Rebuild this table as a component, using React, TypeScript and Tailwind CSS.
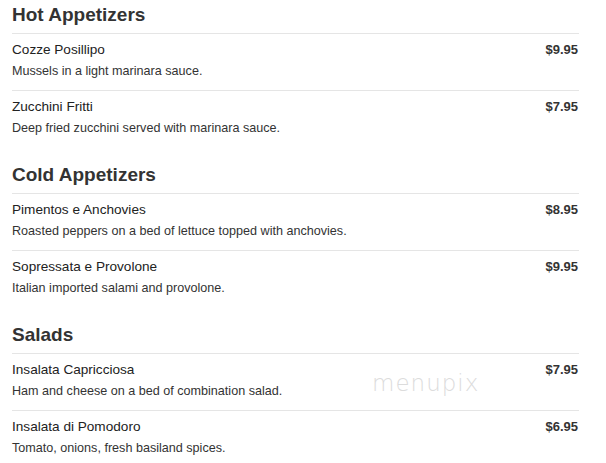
const menu = [
  {
    title: "Hot Appetizers",
    items: [
      { name: "Cozze Posillipo", desc: "Mussels in a light marinara sauce.", price: "$9.95" },
      { name: "Zucchini Fritti", desc: "Deep fried zucchini served with marinara sauce.", price: "$7.95" },
    ],
  },
  {
    title: "Cold Appetizers",
    items: [
      { name: "Pimentos e Anchovies", desc: "Roasted peppers on a bed of lettuce topped with anchovies.", price: "$8.95" },
      { name: "Sopressata e Provolone", desc: "Italian imported salami and provolone.", price: "$9.95" },
    ],
  },
  {
    title: "Salads",
    items: [
      { name: "Insalata Capricciosa", desc: "Ham and cheese on a bed of combination salad.", price: "$7.95" },
      { name: "Insalata di Pomodoro", desc: "Tomato, onions, fresh basiland spices.", price: "$6.95" },
    ],
  },
];

export default function App() {
  return (
    <div className="relative min-h-[463px] bg-white pt-1 font-['Liberation_Sans',Arial,sans-serif] text-[#333]">
      <div className="ml-3 w-[567px]">
        {menu.map((section, i) => (
          <section key={section.title} className={i > 0 ? "mt-[17px]" : ""}>
            <h2 className="mb-[7px] text-[19px] font-bold leading-[22px] text-[#333]">{section.title}</h2>
            {section.items.map((item) => (
              <div key={item.name} className="border-t border-[#e5e5e5] pb-[10px] pt-[7px]">
                <div className="flex items-start justify-between">
                  <div className="text-[13.6px] leading-[18px] text-[#222]">{item.name}</div>
                  <div className="pr-px text-[13px] font-bold leading-[18px] text-[#333]">{item.price}</div>
                </div>
                <p className="mt-[3px] text-[12.6px] leading-[18px] text-[#333]">{item.desc}</p>
              </div>
            ))}
          </section>
        ))}
      </div>
      {/* watermark */}
      <div className="pointer-events-none absolute left-[372px] top-[366px] font-['DejaVu_Sans',sans-serif] text-[23px] font-extralight tracking-[1px] text-[#dcdcdc]">
        menupix
      </div>
    </div>
  );
}
